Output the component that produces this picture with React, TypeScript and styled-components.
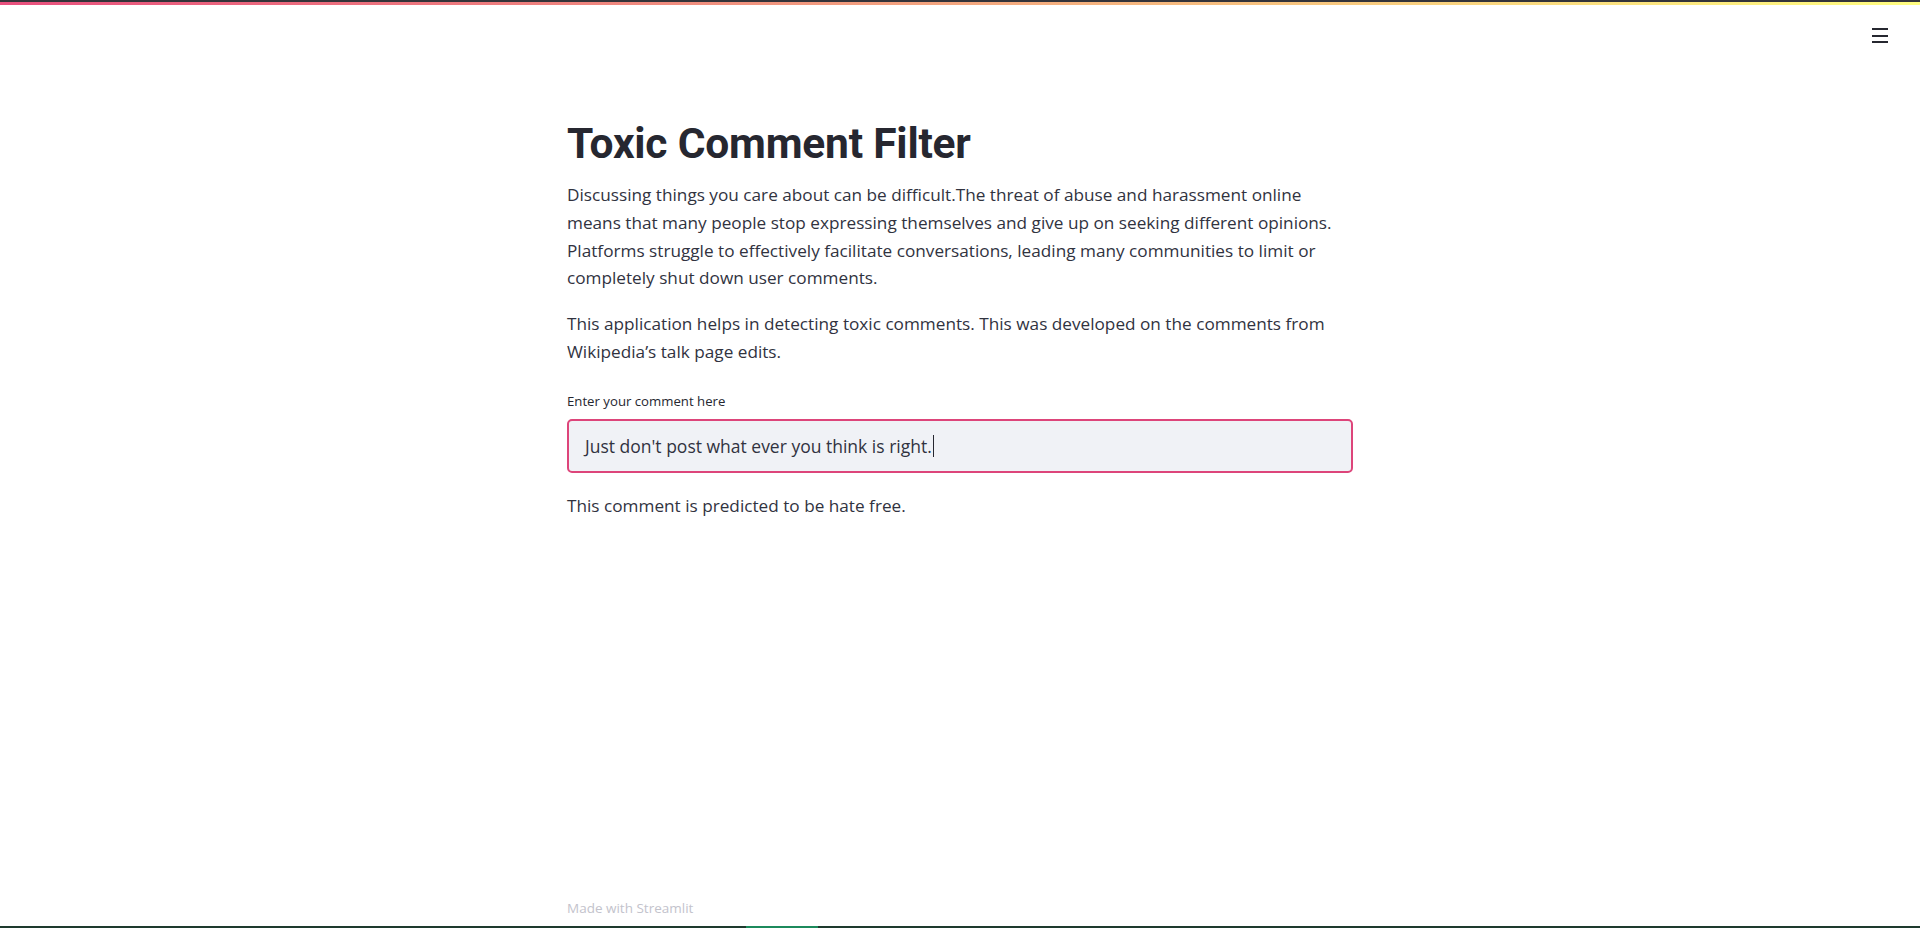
import styled, { createGlobalStyle } from 'styled-components'

const GlobalStyle = createGlobalStyle`
    html, body {
        margin: 0;
        padding: 0;
        background: #ffffff;
    }
    body {
        font-family: "Open Sans", "Noto Sans", sans-serif;
        color: #262730;
    }
    * {
        box-sizing: border-box;
    }
`

const Page = styled.div`
    display: flex;
    flex-direction: column;
    min-height: 100vh;
    height: 928px;
`
const Decoration = styled.div`
    height: 5px;
    border-top: 2px solid #34343a;
    background: linear-gradient(90deg, #e8507e, #fffd80);
`
const Header = styled.header`
    display: flex;
    justify-content: flex-end;
    padding: 23px 32px 0 0;
`
const MenuButton = styled.button`
    display: flex;
    flex-direction: column;
    gap: 4.5px;
    width: 16px;
    padding: 0;
    border: none;
    background: none;
    cursor: pointer;
    span {
        display: block;
        height: 2px;
        background: #262730;
    }
`
const Main = styled.main`
    flex: 1;
    width: 786px;
    margin: 0 auto;
    padding-top: 75px;
`
const Title = styled.h1`
    margin: 0 0 12px;
    font-family: Roboto, "Open Sans", sans-serif;
    font-size: 42.5px;
    font-weight: 700;
    line-height: 1.2;
    letter-spacing: -0.2px;
`
const Paragraph = styled.p`
    margin: 0 0 18px;
    font-size: 17.2px;
    line-height: 27.8px;
    color: #31333f;
`
const Label = styled.label`
    display: block;
    margin: 26px 0 9px;
    font-size: 13.2px;
    color: #262730;
`
const InputBox = styled.div`
    display: flex;
    align-items: center;
    height: 54px;
    padding: 0 16px;
    border: 2px solid #dd457a;
    border-radius: 5px;
    background: #f0f2f6;
    font-size: 17.5px;
    color: #31333f;
`
const Caret = styled.span`
    display: inline-block;
    width: 1px;
    height: 22px;
    margin-left: 1px;
    background: #262730;
`
const Result = styled(Paragraph)`
    margin-top: 19px;
`
const Footer = styled.footer`
    width: 786px;
    margin: 0 auto;
    padding-bottom: 9px;
    font-size: 13.5px;
    color: #c3c3cc;
`
const BottomStrip = styled.div`
    display: flex;
    height: 2px;
    background: #1e3a2e;
`
const StripSegment = styled.div<{ $width: number }>`
    width: ${p => p.$width}px;
    background: #1c8a5c;
`
const StripFill = styled.div`
    width: 746px;
`

const App = () => {
    return (
        <>
            <GlobalStyle />
            <Page>
                <Decoration />
                <Header>
                    <MenuButton aria-label="menu">
                        <span /><span /><span />
                    </MenuButton>
                </Header>
                <Main>
                    <Title>Toxic Comment Filter</Title>
                    <Paragraph>
                        Discussing things you care about can be difficult.The threat of abuse and harassment online means that many people stop expressing themselves and give up on seeking different opinions. Platforms struggle to effectively facilitate conversations, leading many communities to limit or completely shut down user comments.
                    </Paragraph>
                    <Paragraph>
                        This application helps in detecting toxic comments. This was developed on the comments from Wikipedia’s talk page edits.
                    </Paragraph>
                    <Label>Enter your comment here</Label>
                    <InputBox>
                        Just don't post what ever you think is right.<Caret />
                    </InputBox>
                    <Result>This comment is predicted to be hate free.</Result>
                </Main>
                <Footer>Made with Streamlit</Footer>
                <BottomStrip>
                    <StripFill />
                    <StripSegment $width={72} />
                </BottomStrip>
            </Page>
        </>
    )
}

export default App
